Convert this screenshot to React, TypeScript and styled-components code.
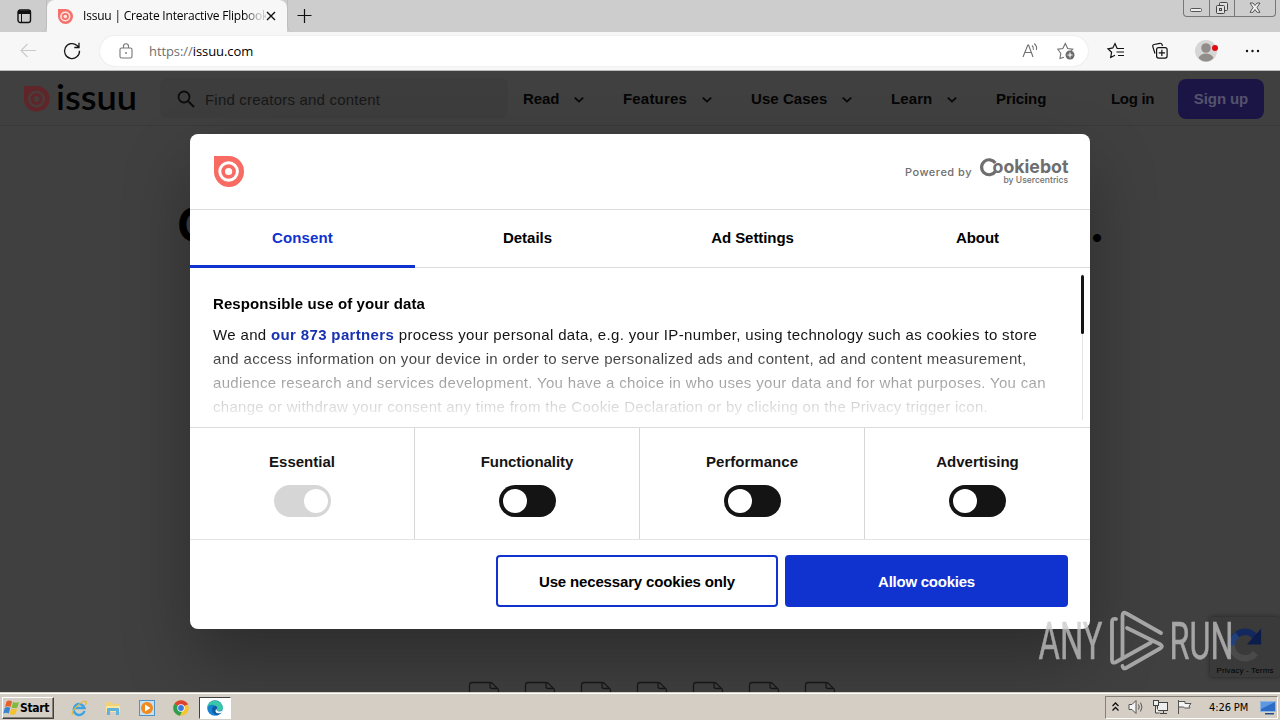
import React from "react";
import styled, { createGlobalStyle } from "styled-components";

const Global = createGlobalStyle`
  * { box-sizing: border-box; }
  body { margin: 0; overflow: hidden; font-family: "Liberation Sans", Arial, sans-serif; }
  svg { display: block; flex: none; overflow: visible; }
  button { font: inherit; letter-spacing: inherit; padding: 0; border: 0; background: none; }
`;

const Screen = styled.div`
  width: 1280px; height: 720px; display: flex; flex-direction: column; position: relative; overflow: hidden;
`;

/* ---------- browser chrome ---------- */
const TabStrip = styled.div`
  height: 32px; flex: none; background: #cdcdcd; display: flex; align-items: stretch;
`;
const TabActions = styled.div`
  width: 47px; padding: 9px 0 0 17px; border-bottom-right-radius: 6px; border-right: 1px solid #bdbdbd;
`;
const Tab = styled.div`
  width: 240px; background: #f7f7f7; border-radius: 8px 8px 0 0; display: flex; align-items: center; padding: 0 11px 0 11px;
`;
const TabTitle = styled.div`
  flex: 1; margin-left: 10px; width: 175px; overflow: hidden; white-space: nowrap; color: #000;
  font: 12px/18px "Open Sans", sans-serif; letter-spacing: -0.2px;
  mask-image: linear-gradient(90deg, #000 160px, rgba(0, 0, 0, 0.2) 177px);
`;
const NewTab = styled.div`
  flex: 1; padding: 8px 0 0 9px; border-left: 1px solid #bdbdbd; border-bottom-left-radius: 6px;
`;
const WindowButtons = styled.div`
  display: flex; width: 93px; height: 17px; margin-right: 4px; border: 1px solid #777; border-top: 0; border-radius: 0 0 4px 4px;
`;
const WindowButton = styled.div<{ $w: number }>`
  width: ${(p) => p.$w}px; display: flex; justify-content: center; align-items: center;
  & + & { border-left: 1px solid #777; }
`;
const Toolbar = styled.div`
  height: 39px; flex: none; background: #f7f7f7; border-bottom: 1px solid #b9bdbb; display: flex; align-items: center; padding: 0 19px 0 20px;
`;
const AddressBar = styled.div`
  width: 988px; height: 30px; margin-left: 19px; border-radius: 15px; background: #fff; display: flex; align-items: center; padding: 0 13px 0 19px;
  box-shadow: 0 0 2px #ddd;
`;
const Url = styled.div`
  flex: 1; margin-left: 15px; font: 13px/20px "Open Sans", sans-serif; letter-spacing: -0.08px; color: #000;
  span { color: #707070; }
`;
const ToolbarIcons = styled.div`
  flex: 1; display: flex; align-items: center; justify-content: space-between; margin-left: 19px;
`;
const Spacer = styled.div<{ $w: number }>`
  width: ${(p) => p.$w}px; flex: none;
`;

/* ---------- dimmed site ---------- */
const Page = styled.div`
  height: 621px; flex: none; background: #404040; position: relative; overflow: hidden;
`;
const SiteHeader = styled.div`
  height: 55px; display: flex; align-items: center; padding-left: 24px; border-bottom: 1px solid #393939; background: #404040;
`;
const Search = styled.div`
  width: 348px; height: 40px; margin-left: 24px; border-radius: 8px; background: #3d3d3d; display: flex; align-items: center; padding: 2px 0 0 17px;
  font-size: 15px; letter-spacing: 0.2px; color: #181818;
  svg { margin: -1px 10px 0 0; }
`;
const Nav = styled.div`
  margin-left: 15px; display: flex; align-items: center; font-size: 15px; font-weight: 700; color: #050505; white-space: nowrap;
`;
const NavItem = styled.div<{ $w: number; $ls: number }>`
  width: ${(p) => p.$w}px; letter-spacing: ${(p) => p.$ls}px; display: flex; align-items: center; justify-content: space-between; padding-right: 38px;
  svg { position: relative; top: 1px; }
`;
const SignUp = styled.button`
  width: 86px; height: 40px; margin-top: 1px; border-radius: 8px; background: #1b1546; color: #55536c; font-weight: 700; letter-spacing: -0.1px;
`;
const Hero = styled.div`
  display: flex; justify-content: space-between; padding: 75px 175px 0 177px; font: 700 48px/48px Inter, sans-serif; color: #000;
`;
const Files = styled.div`
  position: absolute; left: 468px; top: 610px; display: flex; gap: 24px;
`;
const Recaptcha = styled.div`
  position: absolute; left: 1210px; top: 546px; width: 70px; height: 60px; background: #3a3a3a; border-radius: 3px; box-shadow: 0 0 4px #222;
  display: flex; flex-direction: column; align-items: center; padding-top: 8px;
  font-size: 8px; line-height: 10px; letter-spacing: 0.15px; color: #000; white-space: nowrap;
`;

/* ---------- consent dialog ---------- */
const Dialog = styled.div`
  position: absolute; left: 190px; top: 134px; width: 900px; height: 495px; background: #fff; border-radius: 8px; color: #141414;
  box-shadow: 0 32px 68px rgba(0, 0, 0, 0.3); display: flex; flex-direction: column; font-size: 15px; overflow: hidden;
`;
const DialogHeader = styled.div`
  height: 76px; flex: none; border-bottom: 1px solid #dcdcdc; display: flex; align-items: center; justify-content: space-between; padding: 0 21px 0 24px;
`;
const PoweredBy = styled.div`
  display: flex; align-items: center; font: 500 11px/14px Inter, sans-serif; letter-spacing: 0.5px; color: #6e6e6e;
  svg { margin-left: 7px; }
`;
const Tabs = styled.div`
  height: 58px; flex: none; display: grid; grid-template-columns: repeat(4, 225px); border-bottom: 1px solid #dcdcdc;
`;
const DialogTab = styled.button<{ $active?: boolean; $ls: number }>`
  font-weight: 700; letter-spacing: ${(p) => p.$ls}px; color: ${(p) => (p.$active ? "#1032cf" : "#000")};
  height: 58px; padding-bottom: ${(p) => (p.$active ? 0 : 3)}px; border-bottom: ${(p) => (p.$active ? "3px solid #1032cf" : "0")};
`;
const Body = styled.div`
  height: 159px; flex: none; display: flex; padding: 6px 6px 7px 23px; justify-content: space-between;
`;
const Copy = styled.div`
  padding-top: 18px; mask-image: linear-gradient(#000 70px, rgba(0, 0, 0, 0.8) 86px, rgba(0, 0, 0, 0.4) 108px, rgba(0, 0, 0, 0.15) 134px, transparent 152px);
`;
const Title = styled.div`
  font-weight: 700; line-height: 24px; letter-spacing: 0.1px; margin-bottom: 7px; color: #000;
`;
const Line = styled.div<{ $ls: number }>`
  line-height: 24px; white-space: nowrap; letter-spacing: ${(p) => p.$ls}px;
  b { color: #1832b0; }
`;
const Track = styled.div`
  width: 3px; background: linear-gradient(90deg, transparent 1px, #e4e4e4 1px, #e4e4e4 2px, transparent 2px);
`;
const Thumb = styled.div`
  height: 59px; margin-top: 1px; border-radius: 2px; background: #141414;
`;
const Categories = styled.div`
  height: 113px; flex: none; display: grid; grid-template-columns: repeat(4, 225px); border-top: 1px solid #dcdcdc; border-bottom: 1px solid #e4e4e4;
`;
const Category = styled.div<{ $ls: number }>`
  display: flex; flex-direction: column; align-items: center; padding-top: 22px; font-weight: 700; line-height: 24px; letter-spacing: ${(p) => p.$ls}px;
  border-right: 1px solid #d6d6d6;
  &:last-child { border-right: 0; }
`;
const Switch = styled.div<{ $on?: boolean }>`
  width: 57px; height: 32px; margin-top: 11px; border-radius: 16px; background: ${(p) => (p.$on ? "#d6d6d6" : "#141414")};
  display: flex; align-items: center; justify-content: ${(p) => (p.$on ? "flex-end" : "flex-start")}; padding: 0 3px 0 4px;
`;
const Knob = styled.div`
  width: 24px; height: 24px; border-radius: 50%; background: #fff;
`;
const Actions = styled.div`
  display: flex; justify-content: flex-end; gap: 7px; padding: 15px 22px 0 0;
`;
const ActionButton = styled.button<{ $primary?: boolean }>`
  width: ${(p) => (p.$primary ? 283 : 282)}px; height: 52px; border: 2px solid #1032cf; border-radius: 4px; font-weight: 700;
  letter-spacing: ${(p) => (p.$primary ? -0.25 : -0.16)}px;
  background: ${(p) => (p.$primary ? "#1032cf" : "#fff")}; color: ${(p) => (p.$primary ? "#fff" : "#000")};
`;

const Watermark = styled.svg`
  position: absolute; left: 1036px; top: 606px;
`;

/* ---------- taskbar ---------- */
const Taskbar = styled.div`
  height: 28px; flex: none; background: #d5cec5; box-shadow: inset 0 1px 0 #d5cec5, inset 0 2px 0 #fff; position: relative;
  display: flex; align-items: center; padding: 3px 2px 0 2px;
`;
const Start = styled.button`
  width: 52px; height: 22px; display: flex; align-items: center; border: 1px solid; border-color: #fff #404040 #404040 #fff; box-shadow: inset -1px -1px 0 #848078;
  font: 700 12px/16px "DejaVu Sans Condensed", "DejaVu Sans", sans-serif; letter-spacing: -0.3px; color: #000;
`;
const Pins = styled.div`
  display: flex; align-items: center; gap: 18px; margin-left: 17px; flex: 1;
`;
const ActiveTask = styled.div`
  width: 32px; height: 22px; margin-left: -8px; background: #fff; border: 1px solid; border-color: #404040 #fff #fff #404040; display: flex; align-items: center; justify-content: center;
`;
const Tray = styled.div`
  width: 173px; height: 23px; border: 1px solid; border-color: #848078 #fff #fff #848078; display: flex; align-items: center; padding-left: 5px;
  font: 11px/14px "DejaVu Sans Condensed", "DejaVu Sans", sans-serif; letter-spacing: -0.1px; color: #000;
`;
const Clock = styled.div`
  margin: 0 10px 0 15px; width: 41px; white-space: nowrap;
`;

const IssuuMark = ({ w, h, color, ring }: { w: number; h: number; color: string; ring: string }) => (
  <svg width={w} height={h} viewBox="0 0 30 31" preserveAspectRatio="none">
    <path d="M0 0H15A15 15.500 0 1 1 0 15.500Z" fill={color} />
    <circle cx="14.600" cy="15.500" r="8.800" fill="none" stroke={ring} strokeWidth="3" />
    <circle cx="14.600" cy="15.500" r="3.600" fill={ring} />
  </svg>
);

const Chevron = () => (
  <svg width="12" height="12" viewBox="0 0 12 12" fill="none" stroke="#080808" strokeWidth="1.800">
    <path d="M1.800 4.600 6 8.600 10.200 4.600" />
  </svg>
);

const BackIcon = () => (
  <svg width="17" height="16" fill="none" stroke="#c9c9c9" strokeWidth="1.100"><path d="M16 7.500H1M7.500 1 1 7.500 7.500 14" /></svg>
);
const ReloadIcon = () => (
  <svg width="18" height="18" viewBox="0 0 18 18" fill="none" stroke="#161616" strokeWidth="1.300"><path d="M16.500 8.800A7.500 7.500 0 1 1 14 3.500L16 5.300M16 .8v4.700h-4.700" /></svg>
);
const LockIcon = () => (
  <svg width="15" height="17" fill="none" stroke="#777" strokeWidth="1.100"><rect x="1" y="5" width="12" height="10" rx="1.500" /><path d="M4.500 5V3.300a2.500 2.500 0 0 1 5 0V5" /><circle cx="7" cy="10" r=".9" fill="#777" stroke="none" /></svg>
);
const ReadAloudIcon = () => (
  <svg width="17" height="16" fill="none" stroke="#6f6f6f" strokeWidth="1.100"><path d="M1 14 5.800 2h.8L11 14M2.700 9.500h6.700M10 2.500q2 2 1.300 4.300M12.300 .5q3.200 3 2 6.500" /></svg>
);
const AddFavoriteIcon = () => (
  <svg width="18" height="18" fill="none" stroke="#6f6f6f" strokeWidth="1.100"><path d="M7 15.200l-4 1.300.8-5.200L.8 7.200l5-.7L8.300 1.500l2.400 5 5 .7-1.600 1.800" /><circle cx="13" cy="13" r="4.500" fill="#6b6b6b" stroke="none" /><path d="M13 10.500v5M10.500 13h5" stroke="#fff" /></svg>
);
const FavoritesIcon = () => (
  <svg width="18" height="18" fill="none" stroke="#111" strokeWidth="1.200"><path d="M9.500 6.200H10L8 1.600 5.800 5.900 1 6.800l3.600 3.500-.9 5.200L8 13.200M10 6.500H17M9.500 10H17M11 13.500h6" /></svg>
);
const CollectionsIcon = () => (
  <svg width="18" height="18" fill="none" stroke="#111" strokeWidth="1.200"><path d="M4 11.500 1.800 4.600Q1.300 3 3 2.500L9 1.300q1.500-.3 2 1.200l.5 1.500" /><rect x="5.600" y="5.600" width="10.500" height="10.500" rx="2" /><path d="M10.850 7.800v6.200M7.750 10.850h6.200" /></svg>
);
const AvatarIcon = () => (
  <svg width="24" height="24" viewBox="0 0 24 24"><circle cx="11" cy="12" r="11" fill="#d6d6d4" /><circle cx="11" cy="9" r="4.800" fill="#918d8b" /><path d="M3.500 19q2-4.500 7.500-4.500t7.500 4.500q-3.500 3.500-7.500 3.500t-7.500-3.500" fill="#918d8b" /><circle cx="20" cy="9" r="3" fill="#e00b14" /></svg>
);

const ExplorerFile = () => (
  <svg width="32" height="12" fill="none" stroke="#191919" strokeWidth="1.300"><path d="M1.500 12V4q0-2.500 2.500-2.500H22q1.500 0 2.500 1L30 8q.5.500.5 2v2M22 2V5.500q0 2 2 2h5.500" /></svg>
);

const menu = [
  { label: "Read", width: 100, spacing: -0.1, more: true },
  { label: "Features", width: 128, spacing: 0.18, more: true },
  { label: "Use Cases", width: 140, spacing: 0.06, more: true },
  { label: "Learn", width: 105, spacing: 0.1, more: true },
  { label: "Pricing", width: 115, spacing: -0.08 },
  { label: "Log in", width: 67, spacing: -0.3 },
];

const tabs = [
  { label: "Consent", spacing: 0.15, active: true },
  { label: "Details", spacing: 0 },
  { label: "Ad Settings", spacing: -0.08 },
  { label: "About", spacing: -0.1 },
];

const categories = [
  { name: "Essential", on: true, spacing: 0 },
  { name: "Functionality", spacing: -0.05 },
  { name: "Performance", spacing: 0.03 },
  { name: "Advertising", spacing: 0 },
];

export default function App() {
  return (
    <Screen>
      <Global />
      <TabStrip>
        <TabActions>
          <svg width="15" height="15"><rect x="1" y="1" width="12.500" height="12.500" rx="2.200" fill="none" stroke="#111" strokeWidth="1.400" /><path d="M1 1.500h12.500V5H1Z" fill="#111" /><path d="M4.500 5v8" stroke="#111" /></svg>
        </TabActions>
        <Tab>
          <IssuuMark w={15} h={15} color="#f5716c" ring="#ffe5df" />
          <TabTitle>Issuu | Create Interactive Flipbooks</TabTitle>
          <svg width="10" height="10" stroke="#111" strokeWidth="1.400"><path d="m1 1 8 8M9 1 1 9" /></svg>
        </Tab>
        <NewTab>
          <svg width="16" height="16" stroke="#111" strokeWidth="1.200"><path d="M7.500 1v14M.5 7.500h14" /></svg>
        </NewTab>
        <WindowButtons>
          <WindowButton $w={25}><svg width="13" height="14" fill="#eee" stroke="#555"><rect x=".5" y="7.500" width="11" height="3" rx="1" /></svg></WindowButton>
          <WindowButton $w={26}><svg width="14" height="15" fill="#ddd" stroke="#444"><rect x="4.500" y="1.500" width="8" height="8" rx="1" /><rect x="1.500" y="4.500" width="8" height="8" rx="1" /><rect x="4.500" y="7.500" width="2" height="2" /></svg></WindowButton>
          <WindowButton $w={41}><svg width="13" height="12" fill="#eee" stroke="#555"><path d="M1 1h3l2 2.500L8 1h3L8 5.500l3 4.800H8L6 7.500l-2 2.800H1l3-4.800Z" /></svg></WindowButton>
        </WindowButtons>
      </TabStrip>
      <Toolbar>
        <BackIcon />
        <Spacer $w={26} />
        <ReloadIcon />
        <AddressBar>
          <LockIcon />
          <Url><span>https://</span>issuu.com</Url>
          <ReadAloudIcon />
          <Spacer $w={18} />
          <AddFavoriteIcon />
        </AddressBar>
        <ToolbarIcons>
          <FavoritesIcon />
          <CollectionsIcon />
          <AvatarIcon />
          <svg width="16" height="4" fill="#111"><circle cx="2" cy="2" r="1.200" /><circle cx="7.500" cy="2" r="1.200" /><circle cx="13" cy="2" r="1.200" /></svg>
        </ToolbarIcons>
      </Toolbar>

      <Page>
        <SiteHeader>
          <svg width="112" height="34" viewBox="0 0 112 34">
            <g transform="translate(0 5)">
              <path d="M0 0H13A12.800 12.800 0 1 1 0 13Z" fill="#5f2528" />
              <circle cx="12.500" cy="13" r="7.300" fill="none" stroke="#4b3c3c" strokeWidth="2.500" />
              <circle cx="12.500" cy="13" r="3" fill="#4b3c3c" />
            </g>
            <text x="32" y="29" fontFamily="Lato, sans-serif" fontWeight="600" fontSize="34" textLength="81" lengthAdjust="spacingAndGlyphs" fill="#020202">issuu</text>
          </svg>
          <Search>
            <svg width="18" height="18" fill="none" stroke="#0c0c0c" strokeWidth="1.800"><circle cx="7" cy="7" r="5.500" /><path d="m11 11 6 6" /></svg>
            Find creators and content
          </Search>
          <Nav>
            {menu.map((m) => (
              <NavItem key={m.label} $w={m.width} $ls={m.spacing}>{m.label}{m.more && <Chevron />}</NavItem>
            ))}
            <SignUp>Sign up</SignUp>
          </Nav>
        </SiteHeader>
        <Hero><span>C</span><span>.</span></Hero>
        <Files>{Array.from({ length: 7 }, (_, i) => <ExplorerFile key={i} />)}</Files>
        <Recaptcha>
          <svg width="38" height="41" viewBox="0 0 40 42" fill="none" strokeWidth="7">
            <path d="M6 20A14 14 0 0 1 31 12" stroke="#12285e" />
            <path d="M37 3v17H22Z" fill="#0d1d4b" />
            <path d="M6 20A14 14 0 0 0 31 29" stroke="#4a4a4a" />
            <path d="M6 21A14 14 0 0 1 12 10" stroke="#234178" />
          </svg>
          Privacy - Terms
        </Recaptcha>
      </Page>

      <Dialog>
        <DialogHeader>
          <IssuuMark w={30} h={31} color="#f76b62" ring="#fff" />
          <PoweredBy>
            Powered by
            <svg width="90" height="30" fill="#6e6e6e">
              <path d="M16.300 6A7.500 7.500 0 1 0 16.300 14.500" fill="none" stroke="#6e6e6e" strokeWidth="3.200" />
              <text x="13.500" y="16.300" fontFamily="Inter, sans-serif" fontWeight="700" fontSize="18.500" letterSpacing="0" textLength="76" lengthAdjust="spacingAndGlyphs">ookiebot</text>
              <text x="24.500" y="26" fontFamily="Inter, sans-serif" fontWeight="500" fontSize="9" letterSpacing="0" textLength="64.500" lengthAdjust="spacingAndGlyphs">by Usercentrics</text>
            </svg>
          </PoweredBy>
        </DialogHeader>
        <Tabs>
          {tabs.map((t) => (
            <DialogTab key={t.label} $active={t.active} $ls={t.spacing}>{t.label}</DialogTab>
          ))}
        </Tabs>
        <Body>
          <Copy>
            <Title>Responsible use of your data</Title>
            <Line $ls={0.35}>We and <b>our 873 partners</b> process your personal data, e.g. your IP-number, using technology such as cookies to store</Line>
            <Line $ls={0.33}>and access information on your device in order to serve personalized ads and content, ad and content measurement,</Line>
            <Line $ls={0.32}>audience research and services development. You have a choice in who uses your data and for what purposes. You can</Line>
            <Line $ls={0.28}>change or withdraw your consent any time from the Cookie Declaration or by clicking on the Privacy trigger icon.</Line>
          </Copy>
          <Track><Thumb /></Track>
        </Body>
        <Categories>
          {categories.map((c) => (
            <Category key={c.name} $ls={c.spacing}>
              {c.name}
              <Switch $on={c.on}><Knob /></Switch>
            </Category>
          ))}
        </Categories>
        <Actions>
          <ActionButton>Use necessary cookies only</ActionButton>
          <ActionButton $primary>Allow cookies</ActionButton>
        </Actions>
      </Dialog>

      <Watermark width="200" height="68" fill="#c8c8c8" opacity="0.75">
        <g stroke="#c8c8c8" strokeWidth="0.500">
          <text x="2.500" y="53" fontFamily="Roboto, sans-serif" fontSize="52" textLength="64" lengthAdjust="spacingAndGlyphs">ANY</text>
          <text x="133.500" y="53" fontFamily="Roboto, sans-serif" fontSize="52" textLength="64" lengthAdjust="spacingAndGlyphs">RUN</text>
        </g>
        <g fill="none" stroke="#c8c8c8" strokeWidth="3.800" strokeLinejoin="round" strokeLinecap="round">
          <path d="M80 13q-4-1-4 3V54q0 4 4 2L115 36.500" />
          <path d="M86.500 52V10q0-5 4-2.500L125 27" />
          <path d="M91 22 124.500 38.500q3 2-.5 4L90 62q-3 1.500-3.500-2" />
        </g>
      </Watermark>

      <Taskbar>
        <Start>
          <svg width="17" height="16" viewBox="0 0 17 16"><path d="M3.500 1.500q3-2 5.500 0L7.500 7q-3-1.500-5.500 0Z" fill="#e5602c" /><path d="M10 2q3 1.500 6 0L14.500 7.500q-3 1.500-6 0Z" fill="#7fba3c" /><path d="M1.700 8q3-2 5.500 0L5.800 13.500q-2.800-1.700-5.500 0Z" fill="#3b83d0" /><path d="M8.200 8.500q3 1.500 6 0L12.500 14q-3 1.500-6 0Z" fill="#f4c22f" /></svg>
          Start
        </Start>
        <Pins>
          <svg width="16" height="16" viewBox="0 0 16 16" fill="none"><path d="M13.500 11A5.500 5.500 0 1 1 13.500 8H4" stroke="#3ba3e2" strokeWidth="2.400" /><path d="M2 14.500C-2 13 11-.5 15 1.500q1 1-.8 3.500" stroke="#e2b93b" strokeWidth="1.200" /></svg>
          <svg width="16" height="16" viewBox="0 0 16 16"><path d="M1 2h6l1 2h7v8H1Z" fill="#efd27a" /><path d="M1 6h14v6H1Z" fill="#f8e7a0" /><path d="M2 15V9q0-1 1-1h10q1 0 1 1v6h-3v-4H5v4Z" fill="#62b2dc" /></svg>
          <svg width="16" height="16" viewBox="0 0 16 16"><rect x=".5" y=".5" width="15" height="15" fill="#c7dff0" stroke="#4f92c8" /><circle cx="8" cy="8" r="6" fill="#f08a1d" /><path d="m6 4.500 5.500 3.500L6 11.500Z" fill="#fff" /></svg>
          <svg width="16" height="16" viewBox="0 0 16 16"><circle cx="8" cy="8" r="7.800" fill="#f7c52e" /><path d="M8 8 1.250 4.100A7.800 7.800 0 0 1 14.750 4.100Z" fill="#dd4335" /><path d="M8 8 1.250 4.100A7.800 7.800 0 0 0 7 15.740L10 9Z" fill="#2f9e4f" /><path d="M8 4.200h6.800" stroke="#dd4335" /><circle cx="8" cy="8" r="3.700" fill="#fff" /><circle cx="8" cy="8" r="2.900" fill="#3b78e0" /></svg>
          <ActiveTask>
            <svg width="16" height="16" viewBox="0 0 16 16"><circle cx="8" cy="8" r="7.800" fill="#1583ce" /><path d="M.5 7C1-1 14-1.500 15.800 7q.2 4-4 4-2.500 0-2.200-1.500Q10.500 6 7 5 2.500 4 .5 7" fill="#3cc6a8" /><path d="M5 8.500q1-3 4-2.500 2 1 1 3.200-1 2 1.500 2.500 2 .2 4-.8-2 3.600-5.500 4.300Q5 14 5 8.500" fill="#0d5aa6" /><path d="M9.700 8.500q-.8 2.500 2 2.900 2.200.1 4-1l-1 2q-3 1.500-5 .5-2.500-1.500 0-4.400" fill="#fff" /></svg>
          </ActiveTask>
        </Pins>
        <Tray>
          <svg width="8" height="12" fill="none" stroke="#111" strokeWidth="1.300"><path d="M1.500 4l3-3 3 3M1.500 8.500l3-3 3 3" /></svg>
          <Spacer $w={9} />
          <svg width="16" height="16" fill="#f4f4f4" stroke="#555"><path d="M1 4.500h3l4-4v13l-4-4H1Z" /><path d="M10.500 4.500q1.500 2.500 0 5M12.500 2.500q3 4.500 0 9" fill="none" /></svg>
          <Spacer $w={9} />
          <svg width="16" height="16" fill="#eee" stroke="#444"><rect x="4.500" y="2.500" width="10" height="8" /><path d="M7 13.500h7M10.500 10.500v3M2.500 6v7h4" /><rect x=".5" y=".5" width="5" height="5" /></svg>
          <Spacer $w={8} />
          <svg width="17" height="16" fill="#f4f4f4" stroke="#555"><path d="M1.500 0v14M2 1.500h6v2h6l-2 2.500 1 2H7.500l-1-1H2" /></svg>
          <Clock>4:26 PM</Clock>
          <svg width="16" height="14" viewBox="0 0 16 14"><rect x=".5" y=".5" width="15" height="10" fill="#2c6cc4" stroke="#8fb4de" /><path d="M1 1h14L1 8Z" fill="#5d99e2" /><path d="M5 12h9v1.500H5Z" fill="#234c88" /></svg>
        </Tray>
      </Taskbar>
    </Screen>
  );
}
